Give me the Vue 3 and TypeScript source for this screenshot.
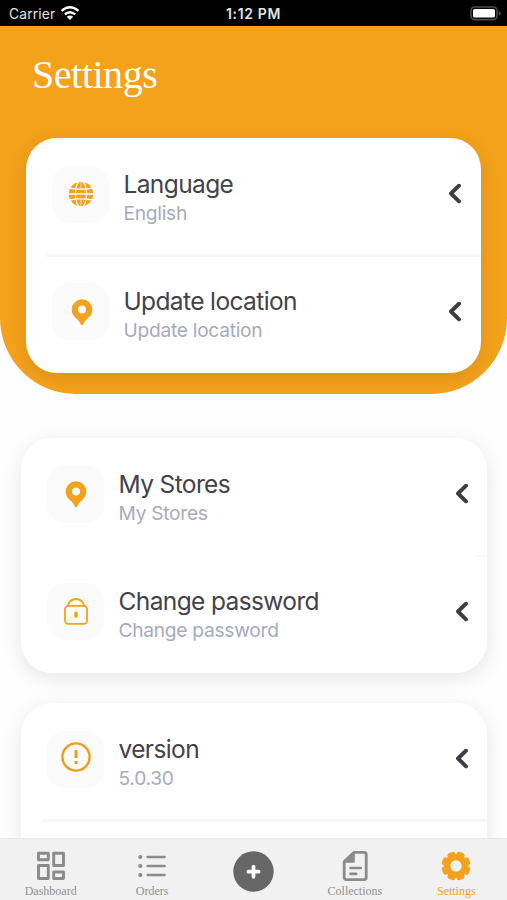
<script setup lang="ts">
type IconName = 'globe' | 'pin' | 'lock' | 'alert'

interface SettingRow {
  icon: IconName
  title: string
  detail: string
  divider?: 'full' | 'stub'
}

interface SettingGroup {
  id: string
  featured?: boolean
  rows: SettingRow[]
}

interface Tab {
  id: string
  label?: string
  active?: boolean
}

const groups: SettingGroup[] = [
  {
    id: 'general',
    featured: true,
    rows: [
      { icon: 'globe', title: 'Language', detail: 'English', divider: 'full' },
      { icon: 'pin', title: 'Update location', detail: 'Update location' },
    ],
  },
  {
    id: 'account',
    rows: [
      { icon: 'pin', title: 'My Stores', detail: 'My Stores', divider: 'stub' },
      { icon: 'lock', title: 'Change password', detail: 'Change password' },
    ],
  },
  {
    id: 'about',
    rows: [{ icon: 'alert', title: 'version', detail: '5.0.30', divider: 'full' }],
  },
]

const tabs: Tab[] = [
  { id: 'dashboard', label: 'Dashboard' },
  { id: 'orders', label: 'Orders' },
  { id: 'add' },
  { id: 'collections', label: 'Collections' },
  { id: 'settings', label: 'Settings', active: true },
]

const gearTeeth = Array.from({ length: 8 }, (_, i) => 22.5 + i * 45)
</script>

<template>
  <div class="screen">
    <div class="status">
      <div class="carrier">
        <span>Carrier</span>
        <svg class="wifi" width="20" height="16" viewBox="0 0 20 16">
          <path d="M1.6 5.9Q10-1.4 18.4 5.9" />
          <path d="M4.8 9.4Q10 5 15.2 9.4" />
          <path class="dot" d="M6.8 11.8Q10 9.2 13.2 11.8L10 15Z" />
        </svg>
      </div>
      <span class="clock">1:12 PM</span>
      <svg class="battery" width="32" height="15" viewBox="0 0 32 15">
        <rect x="1" y="1" width="26" height="12.6" rx="3.6" fill="none" stroke="#4b4b4b" stroke-width="1.6" />
        <path d="M28.7 5Q31 6 31 7.3Q31 8.6 28.7 9.6Z" fill="#4b4b4b" />
        <rect x="3" y="3" width="22" height="8.6" rx="1.6" fill="#fff" />
      </svg>
    </div>

    <main class="content">
      <div class="backdrop"></div>
      <h1>Settings</h1>

      <section v-for="group in groups" :key="group.id" class="card" :class="{ featured: group.featured }">
        <div v-for="row in group.rows" :key="row.title" class="row" :class="row.divider">
          <div class="tile">
            <svg v-if="row.icon === 'globe'" width="26" height="26" viewBox="0 0 26 26">
              <circle cx="13" cy="13" r="12.2" fill="#f4a11b" />
              <g fill="none" stroke="#fbfbfb" stroke-width="1.3">
                <ellipse cx="13" cy="13" rx="5.6" ry="13.4" />
                <path d="M0 13H26M1.5 7Q13 9.4 24.5 7M1.5 19Q13 16.6 24.5 19" />
                <path d="M13 0V7.6M13 18.4V26" stroke-width=".7" />
              </g>
            </svg>
            <svg v-else-if="row.icon === 'pin'" class="pin" width="22" height="27" viewBox="0 0 22 27">
              <path fill="#f4a11b" fill-rule="evenodd" d="M11 .3A10.3 10.3 0 0 1 21.3 10.6C21.3 15.5 18.6 17.8 16.3 19.8C14.3 21.5 13.4 23.2 12.3 25.2Q11 27.5 9.7 25.2C8.6 23.2 7.7 21.5 5.7 19.8C3.4 17.8.7 15.5.7 10.6A10.3 10.3 0 0 1 11 .3ZM11 6.6A4 4 0 1 0 11 14.6A4 4 0 1 0 11 6.6Z" />
            </svg>
            <svg v-else-if="row.icon === 'lock'" width="24" height="27" viewBox="0 0 24 27">
              <g fill="none" stroke="#f4a11b" stroke-width="1.8">
                <rect x="1" y="7.8" width="22" height="18" rx="3.6" />
                <path d="M3.5 8.3C4.8 3.8 7.7 1 12 1S19.2 3.8 20.5 8.3" />
              </g>
              <rect x="10.3" y="13.4" width="3.4" height="6.4" rx="1.6" fill="#f5a400" />
            </svg>
            <svg v-else class="alert" width="30" height="30" viewBox="0 0 30 30">
              <circle cx="15" cy="15" r="13.6" fill="none" stroke="#ee9c1c" stroke-width="2.4" />
              <path d="M15 8V16M15 18.9V21.9" stroke="#ee9c1c" stroke-width="2.9" />
            </svg>
          </div>
          <div class="copy">
            <div class="title">{{ row.title }}</div>
            <div class="detail">{{ row.detail }}</div>
          </div>
          <svg class="chevron" width="14" height="21" viewBox="0 0 14 21">
            <path d="M11 2.7L3 10.5L11 18.3" />
          </svg>
        </div>
      </section>
    </main>

    <nav class="tabs">
      <div v-for="tab in tabs" :key="tab.id" class="tab" :class="{ active: tab.active }">
        <svg v-if="tab.id === 'dashboard'" width="30" height="30" viewBox="0 0 30 30">
          <g fill="none" stroke="#8b8b8b" stroke-width="2.9" stroke-linejoin="round">
            <rect x="2.5" y="2.3" width="9.8" height="6.4" />
            <rect x="17.7" y="2.3" width="9.8" height="12.2" />
            <rect x="2.5" y="14.5" width="9.8" height="13" />
            <rect x="17.7" y="21" width="9.8" height="6.5" />
          </g>
        </svg>
        <svg v-else-if="tab.id === 'orders'" width="30" height="30" viewBox="0 0 30 30">
          <g fill="#8b8b8b">
            <circle cx="3.3" cy="6" r="2.1" />
            <circle cx="3.3" cy="15" r="2.1" />
            <circle cx="3.3" cy="24" r="2.1" />
          </g>
          <path d="M10.5 6H27.7M10.5 15H27.7M10.5 24H27.7" stroke="#8b8b8b" stroke-width="2.3" stroke-linecap="round" />
        </svg>
        <svg v-else-if="tab.id === 'add'" class="add" width="41" height="41" viewBox="0 0 41 41">
          <circle cx="20.5" cy="20.5" r="20.2" fill="#666" />
          <path d="M20.5 15.6V25.8M15.4 20.7H25.6" stroke="#fff" stroke-width="3.7" stroke-linecap="round" />
        </svg>
        <svg v-else-if="tab.id === 'collections'" width="30" height="30" viewBox="0 0 30 30">
          <path d="M13.8 1.4H24.2Q26.2 1.4 26.2 3.4V26.6Q26.2 28.6 24.2 28.6H6.2Q4.2 28.6 4.2 26.6V10.6Z" fill="none" stroke="#8b8b8b" stroke-width="2.8" stroke-linejoin="round" />
          <path d="M14.8 1.4V11.8H4.2V10.6L13.8 1.4Z" fill="#8b8b8b" />
          <path d="M10.5 17H20.8M10.5 22.9H16.2" stroke="#8b8b8b" stroke-width="2.6" stroke-linecap="round" />
        </svg>
        <svg v-else width="30" height="30" viewBox="0 0 30 30">
          <circle cx="15" cy="15" r="8.9" fill="none" stroke="#f4a11b" stroke-width="6.4" />
          <rect v-for="angle in gearTeeth" :key="angle" x="11" y=".5" width="8" height="7" rx="2.2" fill="#f4a11b" :transform="`rotate(${angle} 15 15)`" />
        </svg>
        <span v-if="tab.label">{{ tab.label }}</span>
      </div>
    </nav>
  </div>
</template>

<style>
body {
  background: #fff;
}
</style>

<style scoped>
* {
  box-sizing: border-box;
}

.screen {
  display: flex;
  flex-direction: column;
  height: 900px;
  overflow: hidden;
  background: #fefefe;
  font-family: Inter, 'Liberation Sans', sans-serif;
}

.status {
  display: grid;
  grid-template-columns: 1fr auto 1fr;
  align-items: center;
  flex: none;
  height: 25.5px;
  padding: 2px 5px 0 9px;
  background: #000;
  color: #e4e4e4;
  font-size: 13.8px;
}

.carrier {
  display: flex;
  align-items: center;
  gap: 5px;
  letter-spacing: 0.15px;
}

.wifi {
  fill: none;
  stroke: #fff;
  stroke-width: 2.5;
  margin-top: -2px;
}

.wifi .dot {
  fill: #fff;
  stroke: none;
}

.clock {
  margin-right: 4px;
  font-weight: 600;
  font-size: 14px;
  letter-spacing: 0.65px;
}

.battery {
  justify-self: end;
  margin-top: -1px;
}

.content {
  position: relative;
  flex: 1;
  min-height: 0;
  overflow: hidden;
  padding: 0 20px 0 21px;
}

.backdrop {
  position: absolute;
  inset: 0 0 auto;
  height: 368.5px;
  background: #f4a11b;
  border-radius: 0 0 76px 76px;
}

h1 {
  position: relative;
  margin: 0;
  height: 112px;
  padding: 26px 0 0 11px;
  color: #fff;
  font: 400 40px/46px 'Liberation Serif', serif;
  letter-spacing: -0.45px;
}

.card {
  position: relative;
  height: 235.5px;
  margin-bottom: 29.5px;
  border-radius: 31px;
  background: #fff;
  box-shadow: 0 5px 20px rgba(0, 0, 0, 0.1);
  overflow: hidden;
}

.card.featured {
  margin: 0 6px 64.5px 5px;
}

.row {
  position: relative;
  display: flex;
  align-items: flex-start;
  height: 117.7px;
  padding: 28px 18px 0 26px;
}

.featured .row {
  padding-right: 19px;
}

.row.full::after,
.row.stub::after {
  content: '';
  position: absolute;
  right: 0;
  bottom: -1.5px;
  left: 20px;
  height: 3px;
  background: #f8f8f8;
}

.row.stub::after {
  left: auto;
  width: 10px;
  height: 2px;
}

.tile {
  display: grid;
  place-items: center;
  flex: none;
  width: 57px;
  height: 57px;
  border-radius: 18px;
  background: #fbfbfb;
}

.featured .pin {
  margin: 1px 0 0 2px;
}

.alert {
  margin: -4px 0 0;
}

.copy {
  flex: 1;
  padding: 3.2px 0 0 14.5px;
  white-space: nowrap;
}

.title {
  color: #43424b;
  font-size: 24.5px;
  line-height: 30px;
  letter-spacing: -0.62px;
}

.detail {
  color: #a6aabf;
  font-size: 19.2px;
  line-height: 28px;
  letter-spacing: -0.28px;
}

.chevron {
  margin-top: 17.5px;
  fill: none;
  stroke: #3e3d45;
  stroke-width: 3.9;
  stroke-linecap: round;
  stroke-linejoin: round;
}

.tabs {
  position: relative;
  display: grid;
  grid-template-columns: repeat(5, 1fr);
  flex: none;
  height: 62px;
  border-top: 1px solid #e7e7e7;
  background: #f2f1f1;
}

.tab {
  display: flex;
  flex-direction: column;
  align-items: center;
  padding-top: 12px;
  color: #8f8f8f;
  font: 12px/14px 'Liberation Serif', serif;
}

.tab > svg {
  flex: none;
}

.tab span {
  margin-top: 3px;
}

.tab.active {
  color: #f4a11b;
}
</style>
